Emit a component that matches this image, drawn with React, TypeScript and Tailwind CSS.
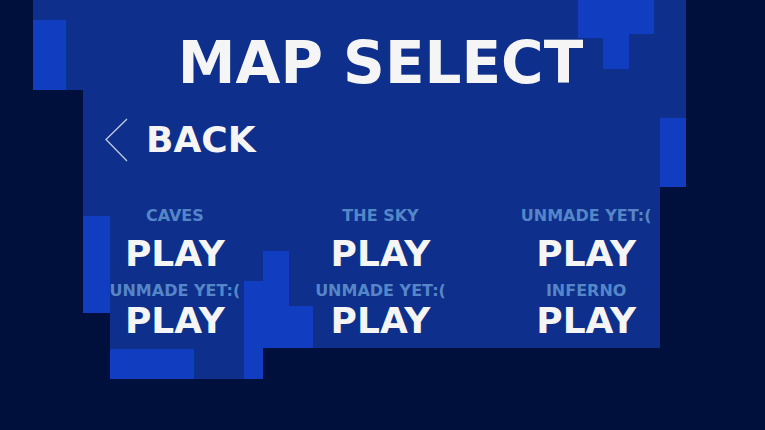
const mapRows = [
    {
        spacing: 'gap-2',
        maps: [
            { id: 'caves', name: 'CAVES' },
            { id: 'sky', name: 'THE SKY' },
            { id: 'slot-3', name: 'UNMADE YET:(' }
        ]
    },
    {
        spacing: 'gap-0',
        maps: [
            { id: 'slot-4', name: 'UNMADE YET:(' },
            { id: 'slot-5', name: 'UNMADE YET:(' },
            { id: 'inferno', name: 'INFERNO' }
        ]
    }
];

// Blocky pixel backdrop behind the menu
function Backdrop() {
    return (
        <svg
            aria-hidden="true"
            viewBox="0 0 765 430"
            preserveAspectRatio="none"
            shapeRendering="crispEdges"
            className="absolute inset-0 w-full h-full"
        >
            <path
                fill="#0e2f8b"
                d="M33 0H686V187H660V348H263V379H110V313H83V90H33Z"
            />
            <g fill="#113dc0">
                <path d="M33 20H66V90H33Z" />
                <path d="M578 0H654V34H629V69H603V38H578Z" />
                <path d="M660 118H686V187H660Z" />
                <path d="M83 216H110V313H83Z" />
                <path d="M263 251H289V306H313V348H263V379H244V281H263Z" />
                <path d="M110 349H194V379H110Z" />
            </g>
        </svg>
    );
}

export default function App() {
    return (
        <main className="relative min-h-screen overflow-hidden bg-[#00103d] font-['DejaVu_Sans',sans-serif] font-bold text-[#f5f5f5]">
            <Backdrop />

            <div className="relative pt-8 pl-[72px] pr-[76px]">
                <h1 className="text-center text-[58px] leading-[62px] whitespace-nowrap">MAP SELECT</h1>

                <a href="#menu" className="mt-6 ml-8 flex w-fit items-center gap-[18px] text-[36px] leading-[44px]">
                    <svg aria-hidden="true" viewBox="0 0 24 44" className="w-6 h-11" fill="none">
                        <path d="M23 1L2 21.5L23 43" stroke="#c3cbe4" strokeWidth="1.3" />
                    </svg>
                    BACK
                </a>

                <div className="mt-[42px] flex flex-col gap-[7px]">
                    {mapRows.map((row, idx) => (
                        <div key={idx} className="grid grid-cols-3">
                            {row.maps.map((map) => (
                                <section key={map.id} className={`flex flex-col items-center ${row.spacing}`}>
                                    <h2 id={map.id} className="text-base leading-6 whitespace-nowrap text-[#5586c8]">
                                        {map.name}
                                    </h2>
                                    <button
                                        type="button"
                                        aria-describedby={map.id}
                                        className="cursor-pointer text-[36px] leading-9"
                                    >
                                        PLAY
                                    </button>
                                </section>
                            ))}
                        </div>
                    ))}
                </div>
            </div>
        </main>
    );
}
